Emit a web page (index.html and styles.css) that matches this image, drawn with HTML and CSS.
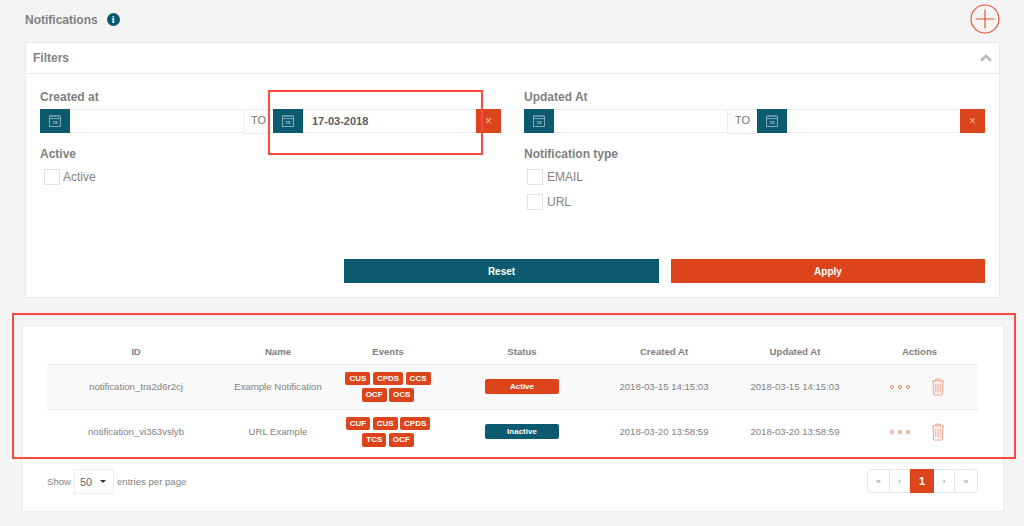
FILE: index.html
```html
<!DOCTYPE html>
<html lang="en">
<head>
<meta charset="utf-8">
<title>Notifications</title>
<link rel="stylesheet" href="styles.css">
</head>
<body>
<div class="page">
  <header class="top">
    <h1 class="title">Notifications</h1>
    <span class="info">i</span>
    <svg class="plus" viewBox="0 0 30 30"><circle cx="15" cy="15" r="14" fill="none" stroke="#e4562f" stroke-width="1.2"/><path d="M5.5 15H24.5M15 5.5V24.5" fill="none" stroke="#e4562f" stroke-width="1.2"/></svg>
  </header>

  <section class="filters">
    <div class="filters-head">
      <span>Filters</span>
      <svg class="chevron" viewBox="0 0 12 8"><path d="M1 6.5L6 2L11 6.5" fill="none" stroke="#b9b9b9" stroke-width="2.6"/></svg>
    </div>
    <div class="filters-body">
      <div class="field-grid">
        <div class="field">
          <div class="field-label">Created at</div>
          <div class="range">
            <span class="cal-btn"><svg class="cal" viewBox="0 0 12 12"><rect x="0.5" y="1" width="11" height="10.5"/><path d="M0.5 3.6H11.5M3 0V2M6 0V2M9 0V2"/><text x="6" y="9.4">15</text></svg></span>
            <span class="range-input"></span>
            <span class="range-to">TO</span>
            <span class="cal-btn"><svg class="cal" viewBox="0 0 12 12"><rect x="0.5" y="1" width="11" height="10.5"/><path d="M0.5 3.6H11.5M3 0V2M6 0V2M9 0V2"/><text x="6" y="9.4">15</text></svg></span>
            <span class="range-input range-value">17-03-2018</span>
            <span class="clear-btn">×</span>
          </div>
        </div>
        <div class="field">
          <div class="field-label">Updated At</div>
          <div class="range">
            <span class="cal-btn"><svg class="cal" viewBox="0 0 12 12"><rect x="0.5" y="1" width="11" height="10.5"/><path d="M0.5 3.6H11.5M3 0V2M6 0V2M9 0V2"/><text x="6" y="9.4">15</text></svg></span>
            <span class="range-input"></span>
            <span class="range-to">TO</span>
            <span class="cal-btn"><svg class="cal" viewBox="0 0 12 12"><rect x="0.5" y="1" width="11" height="10.5"/><path d="M0.5 3.6H11.5M3 0V2M6 0V2M9 0V2"/><text x="6" y="9.4">15</text></svg></span>
            <span class="range-input"></span>
            <span class="clear-btn">×</span>
          </div>
        </div>
        <div class="field field-second">
          <div class="field-label">Active</div>
          <div class="checks checks-left">
            <div class="check"><span class="box"></span>Active</div>
          </div>
        </div>
        <div class="field field-second">
          <div class="field-label">Notification type</div>
          <div class="checks checks-right">
            <div class="check"><span class="box"></span>EMAIL</div>
            <div class="check"><span class="box"></span>URL</div>
          </div>
        </div>
      </div>
      <div class="actions-row">
        <button class="btn btn-reset">Reset</button>
        <button class="btn btn-apply">Apply</button>
      </div>
    </div>
  </section>

  <section class="list">
    <table class="grid">
      <colgroup>
        <col class="c-id"><col class="c-name"><col class="c-events"><col class="c-status"><col class="c-created"><col class="c-updated"><col class="c-actions">
      </colgroup>
      <thead>
        <tr><th>ID</th><th>Name</th><th>Events</th><th>Status</th><th>Created At</th><th>Updated At</th><th>Actions</th></tr>
      </thead>
      <tbody>
        <tr class="odd">
          <td>notification_tra2d6r2cj</td>
          <td>Example Notification</td>
          <td><div class="tags"><span class="tag">CUS</span><span class="tag">CPDS</span><span class="tag">CCS</span><span class="tag">OCF</span><span class="tag">OCS</span></div></td>
          <td><span class="status status-on">Active</span></td>
          <td>2018-03-15 14:15:03</td>
          <td>2018-03-15 14:15:03</td>
          <td><div class="row-actions">
            <svg class="dots" viewBox="0 0 22 6"><circle cx="3" cy="3" r="1.6"/><circle cx="11" cy="3" r="1.6"/><circle cx="19" cy="3" r="1.6"/></svg>
            <svg class="trash" viewBox="0 0 14 18"><path d="M1 3H13M4.6 3V1.2H9.4V3M2 3L2.6 16.2Q2.7 17 3.5 17H10.5Q11.3 17 11.4 16.2L12 3M4.8 5.5V14.5M7 5.5V14.5M9.2 5.5V14.5"/></svg>
          </div></td>
        </tr>
        <tr>
          <td>notification_vi363vslyb</td>
          <td>URL Example</td>
          <td><div class="tags"><span class="tag">CUF</span><span class="tag">CUS</span><span class="tag">CPDS</span><span class="tag">TCS</span><span class="tag">OCF</span></div></td>
          <td><span class="status status-off">Inactive</span></td>
          <td>2018-03-20 13:58:59</td>
          <td>2018-03-20 13:58:59</td>
          <td><div class="row-actions">
            <svg class="dots" viewBox="0 0 22 6"><circle cx="3" cy="3" r="1.6"/><circle cx="11" cy="3" r="1.6"/><circle cx="19" cy="3" r="1.6"/></svg>
            <svg class="trash" viewBox="0 0 14 18"><path d="M1 3H13M4.6 3V1.2H9.4V3M2 3L2.6 16.2Q2.7 17 3.5 17H10.5Q11.3 17 11.4 16.2L12 3M4.8 5.5V14.5M7 5.5V14.5M9.2 5.5V14.5"/></svg>
          </div></td>
        </tr>
      </tbody>
    </table>
    <div class="list-foot">
      <div class="per-page">
        <span>Show</span>
        <span class="select">50<i class="caret"></i></span>
        <span>entries per page</span>
      </div>
      <nav class="pager">
        <span class="pg pg-first">«</span>
        <span class="pg pg-prev">‹</span>
        <span class="pg pg-on">1</span>
        <span class="pg pg-next">›</span>
        <span class="pg pg-last">»</span>
      </nav>
    </div>
  </section>
</div>

<div class="mark mark-date"></div>
<div class="mark mark-table"></div>
</body>
</html>
```

FILE: styles.css
```css
* { box-sizing: border-box; }
html, body { margin: 0; height: 100%; }
body {
  background: #f4f4f4;
  color: #7b7b7b;
  font-family: "Liberation Sans", Arial, sans-serif;
  font-size: 12px;
  overflow: hidden;
  position: relative;
}
.page { padding: 0 20px 0 22px; }

/* header */
.top {
  display: flex;
  align-items: flex-start;
  height: 42px;
  margin: 0 4px 0 3px;
  padding-top: 4px;
}
.title {
  margin: 9px 0 0;
  font-size: 12px;
  line-height: 14px;
  font-weight: 700;
  color: #808080;
}
.info {
  width: 13px;
  height: 13px;
  margin: 9px 0 0 9px;
  border-radius: 50%;
  background: #0b5a70;
  color: #fff;
  font: 700 10px/13px "Liberation Serif", serif;
  text-align: center;
}
.plus { width: 30px; height: 30px; margin-left: auto; }

/* filters */
.filters {
  margin: 0 4px 0 3px;
  height: 256px;
  background: #fff;
  border: 1px solid #e9e9e9;
}
.filters-head {
  display: flex;
  align-items: center;
  justify-content: space-between;
  height: 31px;
  padding: 0 7px 0 7px;
  border-bottom: 1px solid #e9e9e9;
  font-weight: 700;
  color: #828282;
}
.chevron { width: 12px; height: 8px; }
.filters-body { padding: 16px 14px 0; }
.field-grid {
  display: grid;
  grid-template-columns: 461px 461px;
  column-gap: 23px;
}
.field-label {
  font-weight: 700;
  line-height: 14px;
  color: #808080;
  margin-bottom: 5px;
}
.field-second { margin-top: 14px; }
.field-second .field-label { margin-bottom: 8px; }

.range { display: flex; height: 24px; }
.cal-btn {
  flex: 0 0 30px;
  display: flex;
  align-items: center;
  justify-content: center;
  background: #0b5a70;
  color: #b5ced6;
}
.cal { width: 12px; height: 12px; }
.cal rect, .cal path { fill: none; stroke: currentColor; stroke-width: 0.7; }
.cal text {
  fill: currentColor;
  font-family: "Liberation Sans", Arial, sans-serif;
  font-size: 4.4px;
  font-weight: 700;
  text-anchor: middle;
}
.range-input {
  flex: 0 0 173px;
  border-top: 1px solid #eee;
  border-bottom: 1px solid #eee;
  line-height: 22px;
}
.range-value {
  padding-left: 9px;
  font-size: 11px;
  font-weight: 700;
  color: #5c5c5c;
}
.range-to {
  flex: 0 0 30px;
  height: 25px;
  padding-left: 7px;
  border: 1px solid #eee;
  border-right: 0;
  background: #fcfcfc;
  font-size: 11px;
  line-height: 21px;
  color: #777;
}
.clear-btn {
  flex: 0 0 25px;
  background: #dc451b;
  color: #f3b7a4;
  text-align: center;
  font-size: 12px;
  line-height: 24px;
}

.checks-left { padding-left: 4px; }
.checks-right { padding-left: 3px; }
.check {
  display: flex;
  align-items: center;
  gap: 4px;
  height: 16px;
  margin-bottom: 9px;
  color: #828282;
}
.checks-left .check { gap: 3px; }
.box {
  width: 16px;
  height: 16px;
  background: #fff;
  border: 1px solid #e2e2e2;
}

.actions-row {
  display: flex;
  justify-content: flex-end;
  gap: 12px;
  margin-top: 40px;
}
.btn {
  height: 24px;
  padding: 0;
  border: 0;
  color: #fff;
  font: 700 10px "Liberation Sans", Arial, sans-serif;
}
.btn-reset { width: 315px; background: #0b5a70; }
.btn-apply { width: 314px; background: #dc451b; }

/* list */
.list {
  margin-top: 27px;
  height: 187px;
  padding: 14px 25px 0 24px;
  background: #fff;
  border: 1px solid #ececec;
}
.grid {
  width: 931px;
  table-layout: fixed;
  border-collapse: collapse;
  font-size: 9.6px;
  text-align: center;
}
.c-id { width: 178px; }
.c-name { width: 106px; }
.c-events { width: 114px; }
.c-status { width: 154px; }
.c-created { width: 130px; }
.c-updated { width: 132px; }
.c-actions { width: 117px; }
.grid th {
  height: 24px;
  padding: 0;
  font-weight: 700;
  color: #808080;
  border-bottom: 1px solid #ededed;
}
.grid td {
  height: 45px;
  padding: 0;
  border-bottom: 1px solid #e8e8e8;
  color: #828282;
}
.grid tbody tr:last-child td { border-bottom: 0; }
.odd { background: #f9f9f9; }

.tags {
  display: flex;
  flex-wrap: wrap;
  justify-content: center;
  gap: 3px 2.5px;
  width: 90px;
  margin: 0 auto;
}
.tag {
  height: 13.5px;
  padding: 0 4px;
  border-radius: 2px;
  background: #dc451b;
  color: #fff;
  font-size: 8px;
  font-weight: 700;
  line-height: 13.5px;
}
.status {
  display: block;
  width: 74px;
  height: 15px;
  margin: 0 auto;
  border-radius: 2px;
  color: #fff;
  font-size: 8px;
  font-weight: 700;
  line-height: 15px;
}
.status-on { background: #dc451b; }
.status-off { background: #0b5a70; }

.row-actions {
  display: flex;
  align-items: center;
  gap: 20px;
  padding-left: 28px;
}
.dots { width: 22px; height: 6px; }
.dots circle { fill: none; stroke: #ed8d72; stroke-width: 1; }
.trash { width: 14px; height: 18px; }
.trash path { fill: none; stroke: #ef9f88; stroke-width: 1; }

.list-foot {
  display: flex;
  justify-content: space-between;
  align-items: flex-start;
  margin-top: 15px;
  width: 931px;
}
.per-page {
  display: flex;
  align-items: center;
  gap: 3px;
  font-size: 9.6px;
  color: #828282;
}
.select {
  display: flex;
  align-items: center;
  justify-content: space-between;
  width: 40px;
  height: 25px;
  padding: 0 7px 0 5px;
  background: #fff;
  border: 1px solid #ececec;
  font-size: 11px;
  color: #666;
}
.caret {
  width: 0;
  height: 0;
  border: 3px solid transparent;
  border-top: 3px solid #333;
  border-bottom: 0;
}
.pager {
  display: flex;
  height: 24px;
  background: #fff;
  border: 1px solid #e6e6e6;
  border-radius: 4px;
}
.pg {
  display: flex;
  align-items: center;
  justify-content: center;
  font-size: 8px;
  color: #8a8a8a;
  border-right: 1px solid #e6e6e6;
}
.pg-first { width: 22px; }
.pg-prev { width: 20px; }
.pg-on {
  width: 24px;
  margin: -1px 0;
  background: #dc451b;
  color: #fff;
  font-size: 11px;
  font-weight: 700;
  border: 0;
}
.pg-next { width: 21px; }
.pg-last { width: 22px; border-right: 0; }

/* red annotation boxes drawn over the screenshot */
.mark { position: absolute; border: 2px solid #f7493f; pointer-events: none; }
.mark-date { left: 268px; top: 90px; width: 215px; height: 65px; }
.mark-table { left: 12px; top: 313px; width: 1004px; height: 146px; }
```
